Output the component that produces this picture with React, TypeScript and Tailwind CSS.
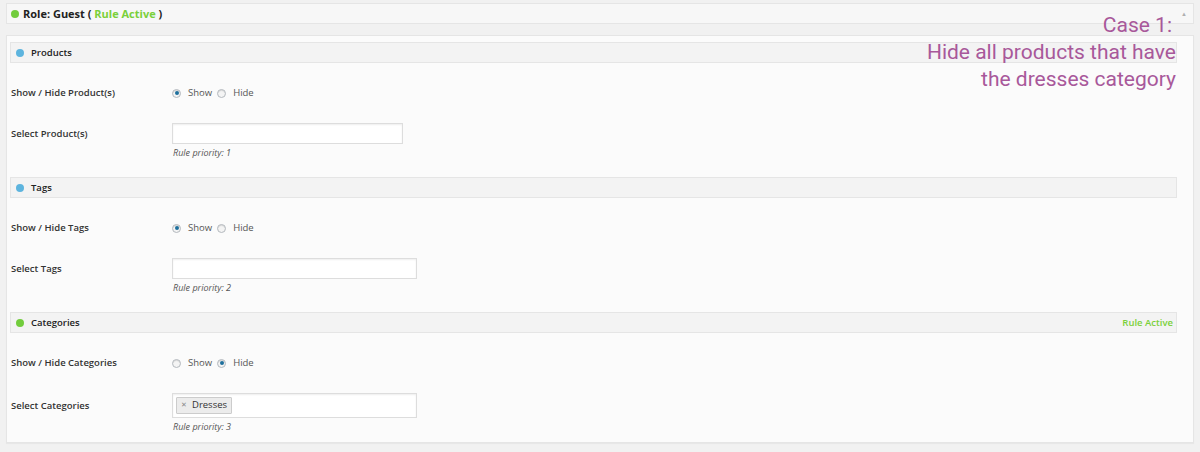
import React from 'react'

type Section = {
  key: string
  title: string
  dot: string
  active?: boolean
  toggleLabel: string
  selectLabel: string
  show: boolean
  inputWidth: string
  priority: number
  tags?: string[]
}

const sections: Section[] = [
  {
    key: 'products',
    title: 'Products',
    dot: 'bg-[#5db4de]',
    toggleLabel: 'Show / Hide Product(s)',
    selectLabel: 'Select Product(s)',
    show: true,
    inputWidth: 'w-[231px] h-[21px]',
    priority: 1,
  },
  {
    key: 'tags',
    title: 'Tags',
    dot: 'bg-[#5db4de]',
    toggleLabel: 'Show / Hide Tags',
    selectLabel: 'Select Tags',
    show: true,
    inputWidth: 'w-[245px] h-[21px]',
    priority: 2,
  },
  {
    key: 'categories',
    title: 'Categories',
    dot: 'bg-[#72cc3c]',
    active: true,
    toggleLabel: 'Show / Hide Categories',
    selectLabel: 'Select Categories',
    show: false,
    inputWidth: 'w-[245px] h-[25px]',
    priority: 3,
    tags: ['Dresses'],
  },
]

function Radio({ checked }: { checked: boolean }) {
  return (
    <span className="w-[9px] h-[9px] rounded-full border border-[#b4b9be] bg-[#f4f4f4] flex items-center justify-center shadow-[inset_0_1px_1px_rgba(0,0,0,0.12)]">
      {checked && <span className="w-[4px] h-[4px] rounded-full bg-[#1e6f9c]" />}
    </span>
  )
}

export default function App() {
  return (
    <div
      className="relative w-[1200px] h-[452px] bg-[#f1f1f1] pt-[3px] pl-[6px] pr-[6px] text-[#333] overflow-hidden"
      style={{ fontFamily: '"Open Sans", "Liberation Sans", sans-serif' }}
    >
      {/* Role header */}
      <div className="h-[21px] border border-[#e5e5e5] bg-[#f7f7f7] flex items-center pl-[4px] pr-[6px]">
        <span className="w-[8px] h-[8px] rounded-full bg-[#72cc3c] mr-[4px]" />
        <span className="text-[11px] font-bold leading-none text-[#222]">
          Role: Guest ( <span className="text-[#7ad03a]">Rule Active</span> )
        </span>
        <span className="ml-auto text-[6px] text-[#b0b0b0] leading-none">▲</span>
      </div>

      {/* Body */}
      <div className="mt-[11px] h-[408px] border border-[#e5e5e5] bg-[#fbfbfb] pt-[6px] pl-[3px] pr-[16px] shadow-[0_1px_1px_rgba(0,0,0,0.04)]">
        {sections.map((s) => (
          <div key={s.key} className="pb-[18px]">
            <div className="h-[21px] border border-[#e5e5e5] bg-[#f3f3f3] flex items-center pl-[5px] pr-[3px]">
              <span className={`w-[8px] h-[8px] rounded-full ${s.dot} mr-[7px]`} />
              <span className="text-[9.5px] font-semibold leading-none text-[#222]">{s.title}</span>
              {s.active && (
                <span className="ml-auto text-[9.5px] font-semibold text-[#7ad03a] leading-none">Rule Active</span>
              )}
            </div>

            <div className="h-[60px] flex items-center pl-[1px]">
              <span className="w-[161px] text-[9.5px] font-semibold">{s.toggleLabel}</span>
              <div className="flex items-center text-[9.5px] text-[#555]">
                <Radio checked={s.show} />
                <span className="ml-[7px] mr-[5px]">Show</span>
                <Radio checked={!s.show} />
                <span className="ml-[7px]">Hide</span>
              </div>
            </div>

            <div className="flex pl-[1px]">
              <span className={`w-[161px] text-[9.5px] font-semibold leading-[12px] ${s.tags ? 'pt-[7px]' : 'pt-[5px]'}`}>
                {s.selectLabel}
              </span>
              <div>
                <div className={`${s.inputWidth} border border-[#ddd] bg-white shadow-[inset_0_1px_2px_rgba(0,0,0,0.07)] flex items-center px-[3px]`}>
                  {s.tags?.map((t) => (
                    <span
                      key={t}
                      className="h-[17px] flex items-center px-[4px] border border-[#ccc] bg-[#ececec] text-[9.5px] text-[#333] rounded-[1px]"
                    >
                      <span className="text-[7px] text-[#888] mr-[5px]">✕</span>
                      {t}
                    </span>
                  ))}
                </div>
                <p className="mt-[3px] text-[9px] italic text-[#555] leading-[12px] pl-[1px]">Rule priority: {s.priority}</p>
              </div>
            </div>
          </div>
        ))}
      </div>

      {/* Annotation overlay */}
      <div
        className="absolute top-[12px] right-[24px] text-right text-[21px] leading-[27px] text-[#a8589a]"
        style={{ fontFamily: 'Roboto, "DejaVu Sans", sans-serif' }}
      >
        <p className="pr-[4px]">Case 1:</p>
        <p>Hide all products that have</p>
        <p>the dresses category</p>
      </div>
    </div>
  )
}
